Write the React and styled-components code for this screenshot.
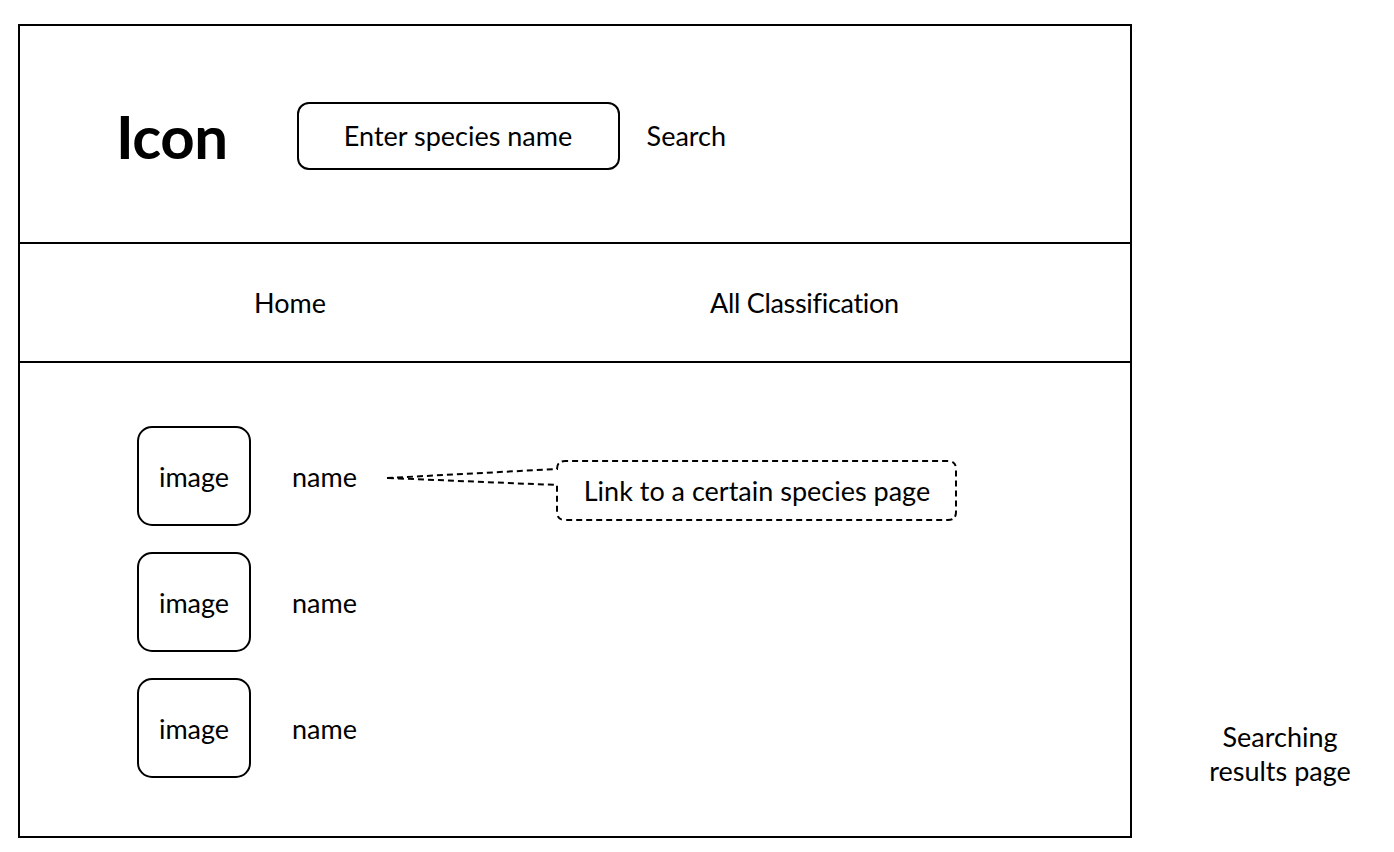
import React from "react";
import styled, { createGlobalStyle } from "styled-components";

const Global = createGlobalStyle`
  html, body { margin: 0; padding: 0; background: #fff; }
  body { font-family: Lato, "Open Sans", sans-serif; color: #000; }
`;

const Page = styled.div`
  display: flex;
  align-items: flex-end;
  padding: 24px 0 0 18px;
  width: 1394px;
  height: 852px;
  box-sizing: border-box;
`;

const Frame = styled.div`
  width: 1114px;
  height: 814px;
  box-sizing: border-box;
  border: 2px solid #000;
  display: flex;
  flex-direction: column;
  align-self: flex-start;
`;

const Header = styled.header`
  height: 213px;
  padding-top: 3px;
  border-bottom: 2px solid #000;
  display: flex;
  align-items: center;
  padding-left: 96px;
  box-sizing: content-box;
`;

const Logo = styled.div`
  font-weight: 700;
  font-size: 60px;
  letter-spacing: -0.5px;
  line-height: 1;
  margin-right: 69px;
`;

const SearchBox = styled.div`
  width: 323px;
  height: 68px;
  box-sizing: border-box;
  border: 2px solid #000;
  border-radius: 12px;
  display: flex;
  align-items: center;
  justify-content: center;
  font-size: 27px;
  margin-right: 27px;
`;

const Label = styled.span`
  font-size: 27px;
  letter-spacing: ${(p) => (p.$tight ? "-0.3px" : "0")};
`;

const Nav = styled.nav`
  height: 117px;
  border-bottom: 2px solid #000;
  display: flex;
  align-items: center;
  gap: ${(p) => p.$gap}px;
  padding-left: 234px;
  box-sizing: content-box;
`;

const Content = styled.main`
  flex: 1;
  display: flex;
  flex-direction: column;
  padding: 63px 0 0 117px;
  gap: 26px;
`;

const Row = styled.div`
  display: flex;
  align-items: center;
`;

const ImageBox = styled.div`
  width: 114px;
  height: 100px;
  box-sizing: border-box;
  border: 2px solid #000;
  border-radius: 15px;
  display: flex;
  align-items: center;
  justify-content: center;
  font-size: 27px;
  margin-right: 41px;
`;

const Callout = styled.div`
  position: relative;
  width: 571px;
  height: 61px;
  margin-left: 29px;
  margin-top: 29px;
  padding-left: 171px;
  box-sizing: border-box;
  display: flex;
  align-items: center;
  justify-content: center;
  font-size: 27px;
`;

const CalloutShape = styled.svg`
  position: absolute;
  inset: 0;
  width: 571px;
  height: 61px;
  overflow: visible;
`;

const CalloutText = styled.span`
  position: relative;
`;

const SideNote = styled.div`
  width: 200px;
  margin-left: 48px;
  margin-bottom: 64px;
  text-align: center;
  font-size: 27px;
  line-height: 34px;
`;

const rows = [0, 1, 2];

export default function App() {
  return (
    <>
      <Global />
      <Page>
        <Frame>
          <Header>
            <Logo>Icon</Logo>
            <SearchBox>Enter species name</SearchBox>
            <Label>Search</Label>
          </Header>
          <Nav $gap={384}>
            <Label>Home</Label>
            <Label $tight>All Classification</Label>
          </Nav>
          <Content>
            {rows.map((i) => (
              <Row key={i}>
                <ImageBox>image</ImageBox>
                <Label>name</Label>
                {i === 0 && (
                  <Callout>
                    <CalloutShape viewBox="0 0 571 61">
                      <path
                        d="M 1 18 L 171 9 Q 171 1 179 1 L 562 1 Q 570 1 570 9 L 570 52 Q 570 60 562 60 L 179 60 Q 171 60 171 52 L 171 25 Z"
                        fill="none"
                        stroke="#000"
                        strokeWidth="2"
                        strokeDasharray="6 4"
                      />
                    </CalloutShape>
                    <CalloutText>Link to a certain species page</CalloutText>
                  </Callout>
                )}
              </Row>
            ))}
          </Content>
        </Frame>
        <SideNote>
          Searching
          <br />
          results page
        </SideNote>
      </Page>
    </>
  );
}
